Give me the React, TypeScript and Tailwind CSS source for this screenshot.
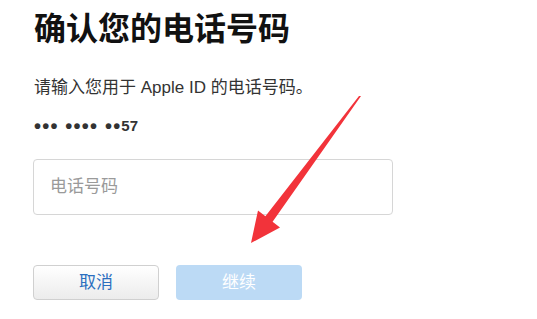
export default function App() {
  return (
    <div className="relative h-[319px] w-[537px] overflow-hidden bg-white font-['Liberation_Sans','Noto_Sans_CJK_SC',sans-serif] text-[#333]">
      <div className="flex flex-col pl-[34px] pt-[2px]">
        <h1 className="font-['Noto_Sans_CJK_SC',sans-serif] text-[32px] font-bold leading-[48px] text-[#111]">确认您的电话号码</h1>
        <p className="mt-[27px] text-[17px] leading-[22px] text-[#333]">请输入您用于 Apple ID 的电话号码。</p>
        <p className="mt-[17px] flex h-[20px] items-center font-['Liberation_Sans',sans-serif] font-bold text-[#333]">
          <span className="text-[20px] leading-[20px] tracking-[1.2px]">••• •••• ••</span>
          <span className="text-[15px] leading-[20px]">57</span>
        </p>
        <div className="ml-[-1px] mt-[23px] flex h-[56px] w-[360px] items-center rounded-[4px] border border-[#d6d6d6] px-[16px]">
          <span className="text-[17px] text-[#9a9a9a]">电话号码</span>
        </div>
        <div className="ml-[-1px] mt-[50px] flex gap-[17px]">
          <button className="flex h-[35px] w-[126px] items-center justify-center rounded-[4px] border border-[#d0d0d0] bg-gradient-to-b from-white to-[#ececec] text-[17px] text-[#2b6fbf]">
            取消
          </button>
          <button className="flex h-[35px] w-[126px] items-center justify-center rounded-[4px] bg-[#bcdaf5] text-[17px] text-white">
            继续
          </button>
        </div>
      </div>
      <svg className="absolute left-0 top-0" width="537" height="319" viewBox="0 0 537 319">
        <path d="M361 96 L272.6 221.7 L280 227.5 L251 243 L258 210.5 L265.4 216.3 L359 96 Z" fill="#f2333a" />
      </svg>
    </div>
  );
}
